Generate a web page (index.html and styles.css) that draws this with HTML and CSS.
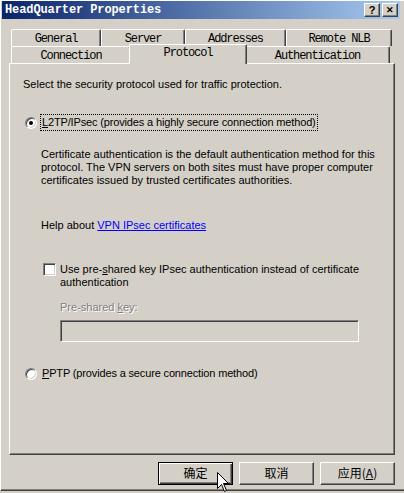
FILE: index.html
```html
<!DOCTYPE html>
<html lang="en">
<head>
    <meta charset="UTF-8">
    <title>HeadQuarter Properties</title>
    <link rel="stylesheet" href="styles.css">
</head>
<body>
    <div class="window">
        <div class="titlebar">
            <span class="title">HeadQuarter Properties</span>
            <span class="caption-btn">?</span>
            <span class="caption-btn close">&#x2715;</span>
        </div>

        <div class="client">
            <div class="tabs">
                <div class="tab-row">
                    <div class="tab w-general">General</div>
                    <div class="tab w-server">Server</div>
                    <div class="tab w-addresses">Addresses</div>
                    <div class="tab w-nlb">Remote NLB</div>
                </div>
                <div class="tab-row">
                    <div class="tab w-connection">Connection</div>
                    <div class="tab w-protocol selected">Protocol</div>
                    <div class="tab w-auth">Authentication</div>
                </div>
            </div>

            <div class="panel">
                <p class="intro">Select the security protocol used for traffic protection.</p>

                <div class="option">
                    <span class="radio checked"></span>
                    <span class="option-label focused"><u>L</u>2TP/IPsec (provides a highly secure connection method)</span>
                </div>

                <p class="desc">Certificate authentication is the default authentication method for this protocol. The VPN servers on both sites must have proper computer certificates issued by trusted certificates authorities.</p>

                <p class="desc help">Help about <a href="#">VPN IPsec certificates</a></p>

                <div class="check-row">
                    <span class="checkbox"></span>
                    <span class="check-label">Use pre-<u>s</u>hared key IPsec authentication instead of certificate authentication</span>
                </div>

                <p class="field-label">Pre-shared <u>k</u>ey:</p>
                <div class="textbox"></div>

                <div class="option pptp">
                    <span class="radio"></span>
                    <span class="option-label"><u>P</u>PTP (provides a secure connection method)</span>
                </div>
            </div>

            <div class="buttons">
                <span class="btn default">确定</span>
                <span class="btn">取消</span>
                <span class="btn">应用(<u>A</u>)</span>
            </div>
        </div>

        <svg class="cursor" width="13" height="21" viewBox="0 0 13 21">
            <path d="M0.5 0.5 L0.5 16.5 L4.5 12.5 L7.5 19.5 L9.5 18.5 L6.5 11.5 L11.5 11.5 Z" fill="#fff" stroke="#000" stroke-width="1"/>
        </svg>
    </div>
</body>
</html>
```

FILE: styles.css
```css
body {
    margin: 0;
    width: 404px;
    height: 493px;
    overflow: hidden;
    background: #d4d0c8;
    font-family: Tahoma, "Liberation Sans", "Noto Sans CJK SC", sans-serif;
    font-size: 11px;
    color: #000;
}
.window {
    position: relative;
    box-sizing: border-box;
    height: 491px;
    border-top: 1px solid #fff;
    border-left: 1px solid #fff;
    border-bottom: 1px solid #404040;
    box-shadow: inset 0 -1px #808080;
}
.titlebar {
    display: flex;
    align-items: center;
    height: 18px;
    margin: 0 4px 0 1px;
    padding: 0 2px 0 3px;
    background: linear-gradient(to right, #0a246a, #a6caf0);
}
.title {
    flex: 1;
    color: #fff;
    font-family: "Liberation Mono", "Noto Sans CJK SC", monospace;
    font-weight: bold;
    font-size: 12px;
    letter-spacing: -0.1px;
}
.caption-btn {
    box-sizing: border-box;
    width: 16px;
    height: 14px;
    margin-left: 2px;
    background: #d4d0c8;
    border: 1px solid;
    border-color: #fff #404040 #404040 #fff;
    box-shadow: inset -1px -1px #808080;
    font-family: "Liberation Sans", sans-serif;
    font-weight: bold;
    font-size: 11px;
    line-height: 12px;
    text-align: center;
}
.caption-btn.close {
    font-size: 9px;
}
.client {
    padding: 10px 0 0 8px;
}
.tab-row {
    display: flex;
    margin-left: 2px;
}
.tab {
    box-sizing: border-box;
    height: 17px;
    border-top: 1px solid #fff;
    border-left: 1px solid #fff;
    border-right: 1px solid #404040;
    border-radius: 2px 2px 0 0;
    box-shadow: inset -1px 0 #808080;
    background: #d4d0c8;
    font-family: "Liberation Mono", monospace;
    font-size: 12px;
    letter-spacing: -1.1px;
    line-height: 19px;
    text-align: center;
}
.w-general { width: 90px; }
.w-server { width: 84px; }
.w-addresses { width: 101px; }
.w-nlb { width: 106px; }
.w-connection { width: 120px; }
.w-protocol { width: 118px; }
.w-auth { width: 145px; }
.tab.selected {
    position: relative;
    z-index: 1;
    height: 20px;
    margin: -2px -2px -1px;
    line-height: 17px;
}
.panel {
    box-sizing: border-box;
    width: 386px;
    height: 392px;
    padding: 14px 0 0 13px;
    border: 1px solid;
    border-color: #fff #404040 #404040 #fff;
    box-shadow: inset -1px -1px #808080;
    line-height: 13px;
}
p {
    margin: 0;
}
.option {
    display: flex;
    align-items: center;
    height: 17px;
    margin-top: 23px;
}
.radio {
    box-sizing: border-box;
    width: 12px;
    height: 12px;
    margin: 0 3px 0 2px;
    border-radius: 50%;
    border: 1px solid;
    border-color: #808080 #fff #fff #808080;
    background: #fff;
    box-shadow: inset 1px 1px #404040, inset -1px -1px #d4d0c8;
    display: flex;
    align-items: center;
    justify-content: center;
}
.radio.checked::after {
    content: "";
    width: 4px;
    height: 4px;
    border-radius: 50%;
    background: #000;
}
.option-label {
    padding: 0 1px;
    border: 1px dotted transparent;
    line-height: 15px;
    letter-spacing: -0.15px;
}
.option-label.focused {
    border-color: #000;
}
.desc {
    width: 345px;
    margin: 17px 0 0 18px;
}
.desc.help {
    margin-top: 32px;
}
a {
    color: #0000ff;
}
.check-row {
    display: flex;
    align-items: flex-start;
    margin: 31px 0 0 20px;
}
.checkbox {
    box-sizing: border-box;
    flex: none;
    width: 13px;
    height: 13px;
    border: 1px solid;
    border-color: #808080 #fff #fff #808080;
    background: #fff;
    box-shadow: inset 1px 1px #404040, inset -1px -1px #d4d0c8;
}
.check-label {
    width: 305px;
    margin-left: 4px;
}
.field-label {
    margin: 12px 0 0 37px;
    color: #808080;
    text-shadow: 1px 1px #fff;
}
.textbox {
    box-sizing: border-box;
    width: 299px;
    height: 22px;
    margin: 6px 0 0 37px;
    border: 1px solid;
    border-color: #808080 #fff #fff #808080;
    box-shadow: inset 1px 1px #404040, inset -1px -1px #d4d0c8;
}
.buttons {
    display: flex;
    justify-content: flex-end;
    gap: 6px;
    width: 386px;
    margin-top: 7px;
}
.btn {
    box-sizing: border-box;
    width: 75px;
    height: 23px;
    border: 1px solid;
    border-color: #fff #404040 #404040 #fff;
    box-shadow: inset -1px -1px #808080;
    font-family: "Noto Sans CJK SC", sans-serif;
    font-size: 12px;
    line-height: 20px;
    text-align: center;
}
.btn.default {
    border: 1px solid #000;
    box-shadow: inset 1px 1px #fff, inset -1px -1px #404040, inset -2px -2px #808080;
}
.cursor {
    position: absolute;
    left: 216px;
    top: 471px;
}
```
